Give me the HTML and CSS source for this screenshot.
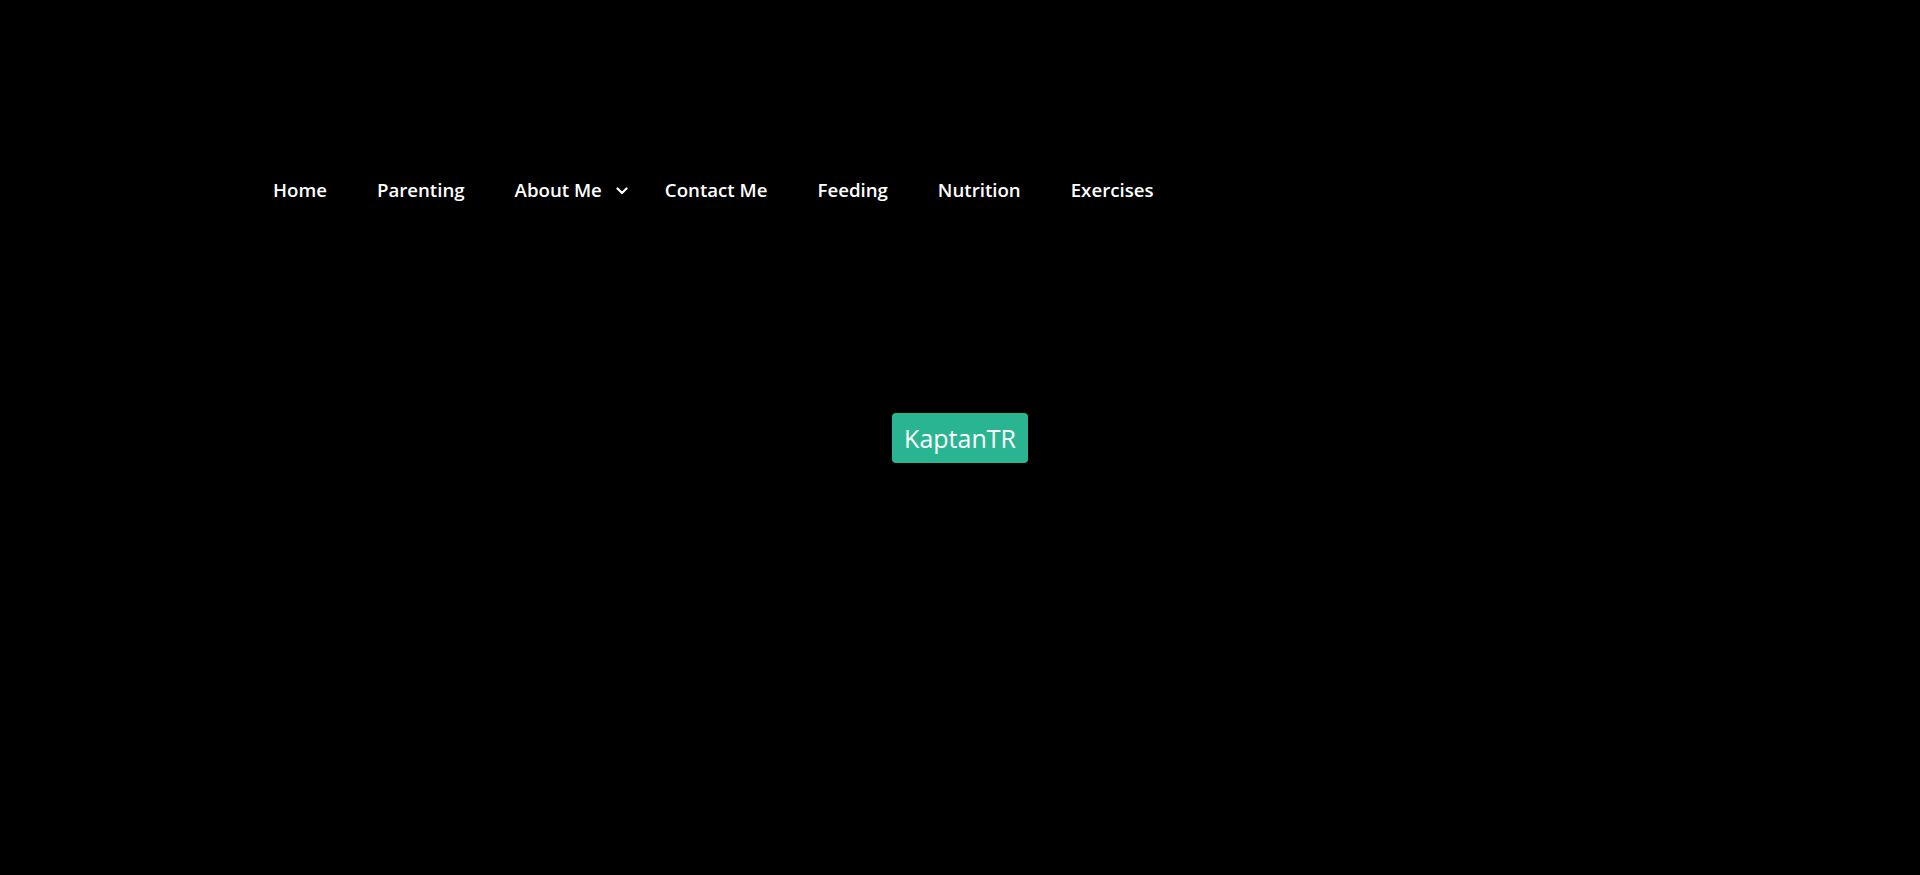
FILE: index.html
```html
<!DOCTYPE html>
<html lang="en">
<head>
<meta charset="utf-8">
<title>KaptanTR</title>
<link rel="stylesheet" href="styles.css">
</head>
<body>
<header class="site-header">
  <nav class="main-nav">
    <a class="nav-link" href="#">Home</a>
    <a class="nav-link" href="#">Parenting</a>
    <a class="nav-link has-sub" href="#">About Me
      <svg class="chev" width="12" height="8" viewBox="0 0 12 8"><path d="M1.5 1.5 L6 6 L10.5 1.5" fill="none" stroke="#fff" stroke-width="2.2" stroke-linecap="round" stroke-linejoin="round"/></svg>
    </a>
    <a class="nav-link" href="#">Contact Me</a>
    <a class="nav-link" href="#">Feeding</a>
    <a class="nav-link" href="#">Nutrition</a>
    <a class="nav-link" href="#">Exercises</a>
  </nav>
</header>
<div class="center-wrap">
  <a class="brand-btn" href="#">KaptanTR</a>
</div>
</body>
</html>
```
FILE: styles.css
```css
html, body {
  margin: 0;
  padding: 0;
  height: 100%;
  background: #000;
  font-family: "Open Sans", "DejaVu Sans", sans-serif;
  overflow: hidden;
}
.site-header {
  padding: 172px 0 0 248px;
}
.main-nav {
  display: flex;
  align-items: center;
}
.nav-link {
  color: #fff;
  text-decoration: none;
  font-weight: 600;
  font-size: 18.65px;
  line-height: 36px;
  padding: 0 25px;
  display: flex;
  align-items: center;
}
.nav-link.has-sub {
  padding-right: 12px;
}
.chev {
  margin-left: 14px;
  margin-top: 1px;
}
.center-wrap {
  position: absolute;
  inset: 0;
  display: flex;
  align-items: center;
  justify-content: center;
}
.brand-btn {
  background: #2ab592;
  color: #fff;
  text-decoration: none;
  font-size: 25px;
  line-height: 50px;
  padding: 0 12px;
  border-radius: 4px;
  font-weight: 400;
}
```
